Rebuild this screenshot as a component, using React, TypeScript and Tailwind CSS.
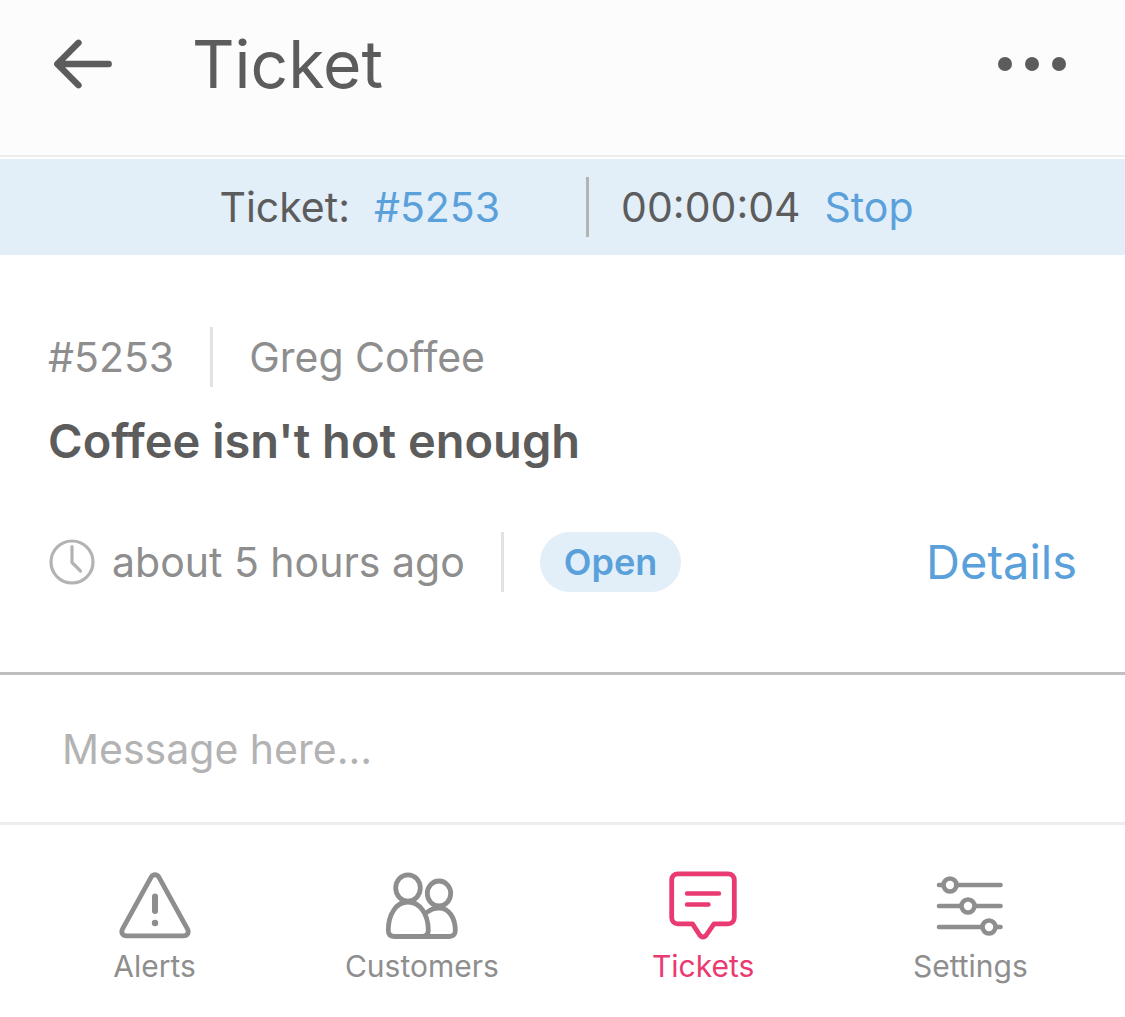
import type { ReactNode } from "react";

function BackIcon() {
  return (
    <svg width="60" height="52" viewBox="0 0 60 52" fill="none" stroke="currentColor" strokeWidth="6.400" strokeLinecap="round" strokeLinejoin="round" aria-hidden="true">
      <path d="M56.700 26H5.500M26.500 4.800 5.300 26l21.200 21.200" />
    </svg>
  );
}

function MoreIcon() {
  return (
    <svg width="70" height="16" viewBox="0 0 70 16" fill="currentColor" aria-hidden="true">
      <circle cx="8" cy="8" r="7" />
      <circle cx="35" cy="8" r="7" />
      <circle cx="62" cy="8" r="7" />
    </svg>
  );
}

function ClockIcon() {
  return (
    <svg width="48" height="46" viewBox="0 0 48 46" fill="none" stroke="currentColor" strokeWidth="3.200" strokeLinecap="round" strokeLinejoin="round" aria-hidden="true">
      <circle cx="24" cy="23" r="21" />
      <path d="M24 7.500v16l8.500 8.500" />
    </svg>
  );
}

function AlertIcon() {
  return (
    <svg width="72" height="70" viewBox="0 0 72 70" fill="none" stroke="currentColor" strokeWidth="4.800" strokeLinecap="round" strokeLinejoin="round" aria-hidden="true">
      <path d="M32 7.300 3.600 58.800C1.600 62.600 3.700 65.800 7.500 65.800h57c3.800 0 5.900-3.200 3.900-7L40 7.300c-2.200-3.400-5.800-3.400-8 0Z" />
      <path d="M36 26.500v14.500" strokeWidth="6" />
      <circle cx="36" cy="53" r="3.200" fill="currentColor" stroke="none" />
    </svg>
  );
}

function CustomersIcon() {
  return (
    <svg width="74" height="70" viewBox="0 0 74 70" fill="none" stroke="currentColor" strokeWidth="4.800" strokeLinecap="round" strokeLinejoin="round" aria-hidden="true">
      <ellipse cx="23" cy="18" rx="12.300" ry="13.200" />
      <path d="M23 32C11 32 3.300 44.500 3.300 60.300c0 4 2 6.200 6 6.200h28c4 0 6-2.200 6-6.200C43.300 44.500 35 32 23 32Z" />
      <ellipse cx="54" cy="23.500" rx="11.700" ry="12.500" />
      <path d="M42.500 42c3-2.500 7.300-3.900 11.500-3.900 9.800 0 16.300 9.500 16.300 22.700 0 3.700-2.300 5.700-6 5.700H37" />
    </svg>
  );
}

function TicketsIcon() {
  return (
    <svg width="70" height="70" viewBox="0 0 70 70" fill="none" stroke="currentColor" strokeWidth="4.800" strokeLinecap="round" strokeLinejoin="round" aria-hidden="true">
      <path d="M10 3.800h50c3.700 0 6.300 2.600 6.300 6.300v37.500c0 3.700-2.600 6.300-6.300 6.300H46L38 65.500q-3 3-6 0L24.500 53.900H10c-3.700 0-6.300-2.600-6.300-6.300V10.100c0-3.700 2.600-6.300 6.300-6.300Z" />
      <path d="M19 23.500h32M19 34.500h21.500" strokeWidth="4.400" />
    </svg>
  );
}

function SettingsIcon() {
  return (
    <svg width="70" height="70" viewBox="0 0 70 70" fill="none" stroke="currentColor" strokeWidth="4.600" strokeLinecap="round" aria-hidden="true">
      <path d="M4 15H8M21 15h44.500M4 36H26M40 36h25.500M4 57H47M61 57h4.500" />
      <circle cx="15" cy="15" r="6.500" />
      <circle cx="33" cy="36" r="6.500" />
      <circle cx="54" cy="57" r="6.500" />
    </svg>
  );
}

type NavItemProps = { label: string; icon: ReactNode; active?: boolean; className?: string };

function NavItem({ label, icon, active = false, className = "" }: NavItemProps) {
  return (
    <a
      href="#"
      aria-current={active ? "page" : undefined}
      className={`flex flex-col items-center gap-2 text-[30px] leading-9 ${active ? "text-[#e93a72]" : "text-[#8e8e8e]"} ${className}`}
    >
      {icon}
      {label}
    </a>
  );
}

export default function App() {
  return (
    <div className="min-h-screen bg-white font-['Inter',sans-serif] text-[#5c5c5c]">
      <header className="flex h-[157px] items-start border-b-2 border-[#ededed] bg-[#fcfcfc] pt-5 pr-[58px] pl-[52px]">
        <button type="button" aria-label="Back" className="flex h-[88px] items-center">
          <BackIcon />
        </button>
        <h1 className="ml-20 text-[66px] leading-[88px]">Ticket</h1>
        <button type="button" aria-label="More options" className="ml-auto flex h-[88px] items-center">
          <MoreIcon />
        </button>
      </header>

      <section aria-label="Active timer" className="mt-0.5 flex h-24 items-center justify-center bg-[#e2eef8] pl-2 text-[41px] leading-[60px]">
        <span>Ticket:</span>
        <a href="#" className="ml-6 text-[#5aa0da]">#5253</a>
        <span className="mr-8 ml-[86px] h-[60px] w-[3px] bg-[#b3b3b3]" />
        <time>00:00:04</time>
        <button type="button" className="ml-6 text-[#5aa0da]">Stop</button>
      </section>

      <main>
        <section className="px-12 pt-[72px] pb-20">
          <div className="flex items-center text-[41px] leading-[60px] text-[#8e8e8e]">
            <span>#5253</span>
            <span className="mx-9 h-[60px] w-[3px] bg-[#e2e2e2]" />
            <span>Greg Coffee</span>
          </div>
          <h2 className="mt-6 text-[47px] leading-[60px] font-semibold">Coffee isn't hot enough</h2>
          <div className="mt-[61px] flex items-center text-[41px] leading-[60px] text-[#8e8e8e]">
            <span className="mr-4 text-[#b3b3b3]">
              <ClockIcon />
            </span>
            <span>about 5 hours ago</span>
            <span className="mx-9 h-[60px] w-[3px] bg-[#e2e2e2]" />
            <span className="rounded-full bg-[#e2eef8] px-6 text-[36px] font-semibold text-[#5aa0da]">Open</span>
            <a href="#" className="ml-auto text-[47px] text-[#5aa0da]">Details</a>
          </div>
        </section>

        <div className="border-t-[3px] border-b-[3px] border-t-[#bfbfbf] border-b-[#ededed]">
          <input
            type="text"
            aria-label="Message"
            placeholder="Message here..."
            className="block h-[147px] w-full bg-transparent px-[62px] text-[41px] outline-none placeholder:text-[#b3b3b3]"
          />
        </div>
      </main>

      <nav aria-label="Main" className="grid grid-cols-4 pt-[45px] pb-8">
        <NavItem label="Alerts" icon={<AlertIcon />} className="pl-7" />
        <NavItem label="Customers" icon={<CustomersIcon />} />
        <NavItem label="Tickets" icon={<TicketsIcon />} active />
        <NavItem label="Settings" icon={<SettingsIcon />} className="pr-7" />
      </nav>
    </div>
  );
}
